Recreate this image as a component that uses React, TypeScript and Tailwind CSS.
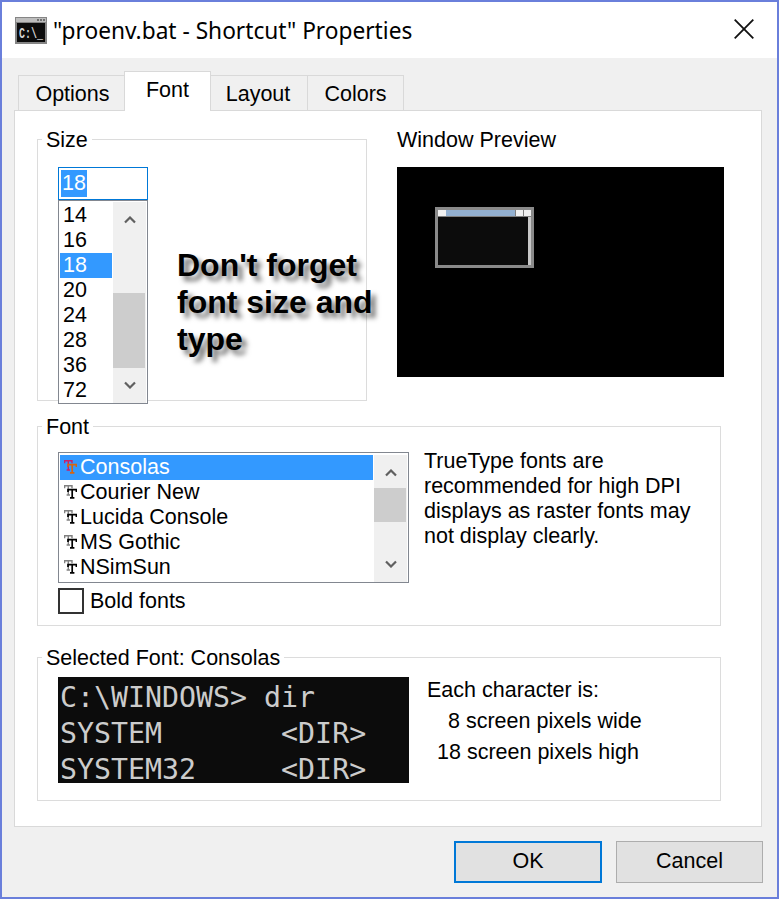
const ui = { fontFamily: '"Liberation Sans", Arial, sans-serif' };

function Chevron({ down = false }: { down?: boolean }) {
  return (
    <svg width="12" height="8" viewBox="0 0 12 8" className="block">
      <path d={down ? "M1 1.5 L6 6.5 L11 1.5" : "M1 6.5 L6 1.5 L11 6.5"} fill="none" stroke="#606060" strokeWidth="2.2" />
    </svg>
  );
}

function TT({ active = false }: { active?: boolean }) {
  return (
    <svg width="13" height="14" viewBox="0 0 13 14" className="mb-[2px] block shrink-0">
      <path d="M0.6 3.2V0.8H8V3.2M4.3 0.8V10M2.6 10H6" fill="none" stroke={active ? "#c8206a" : "#808080"} strokeWidth="1.4" />
      <path d="M4 7V4.6H12.4V7M8.2 4.6V12.6M6 12.8H10.4" fill="none" stroke={active ? "#d8640f" : "#000"} strokeWidth="1.7" />
    </svg>
  );
}

function Tab({ label, className }: { label: string; className: string }) {
  return (
    <div className={`-ml-px flex h-[35px] items-start justify-center border border-b-0 border-[#d9d9d9] bg-[#f0f0f0] pt-[5px] text-[21.5px] leading-[26px] text-black first:ml-0 ${className}`}>
      {label}
    </div>
  );
}

function Group({ title, className, children }: { title: string; className: string; children: React.ReactNode }) {
  return (
    <div className={`relative border border-[#dcdcdc] ${className}`}>
      <span className="absolute left-[4px] top-[-13px] bg-white px-[4px] text-[21.5px] leading-[26px] text-black">{title}</span>
      {children}
    </div>
  );
}

function Scrollbar({ height, thumbTop, thumbHeight }: { height: string; thumbTop: string; thumbHeight: string }) {
  return (
    <div className={`ml-px flex w-[33px] shrink-0 flex-col bg-[#f0f0f0] ${height}`}>
      <div className="flex h-[25px] shrink-0 items-end justify-center pb-[3px]"><Chevron /></div>
      <div className={`${thumbTop} ${thumbHeight} w-[32px] shrink-0 bg-[#cdcdcd]`} />
      <div className="flex-1" />
      <div className="flex h-[25px] shrink-0 items-start justify-center pt-[3px]"><Chevron down /></div>
    </div>
  );
}

export default function App() {
  const sizes = ["14", "16", "18", "20", "24", "28", "36", "72"];
  const fonts = ["Consolas", "Courier New", "Lucida Console", "MS Gothic", "NSimSun"];
  return (
    <div style={ui} className="flex h-[899px] w-[779px] flex-col border-2 border-[#6a7fdb] bg-[#f0f0f0]">
      <div className="flex h-[56px] shrink-0 items-center bg-white">
        <svg width="32" height="27" viewBox="0 0 32 27" className="ml-[13px] mt-[1px] shrink-0">
          <rect width="32" height="27" fill="#858585" />
          <rect x="1" y="1" width="30" height="4" fill="#bdbdbd" />
          <rect x="2" y="6" width="28" height="19" fill="#0c0c0c" />
          <rect x="22" y="2" width="2" height="2" fill="#707070" />
          <rect x="25" y="2" width="2" height="2" fill="#707070" />
          <rect x="28" y="2" width="2" height="2" fill="#707070" />
          <text x="4" y="14" transform="scale(1 1.5)" fontSize="10" fontWeight="700" fill="#d4d4d4" fontFamily="'Liberation Mono', monospace">{"C:\\_"}</text>
        </svg>
        <span className="ml-[6px] mt-[2px] whitespace-nowrap text-[22.7px] leading-none text-black" style={{ fontFamily: '"Noto Sans", sans-serif' }}>
          "proenv.bat - Shortcut" Properties
        </span>
        <svg width="20" height="20" viewBox="0 0 20 20" className="mb-[2px] ml-auto mr-[23px] shrink-0">
          <path d="M0.7 0.7L19.3 19.3M19.3 0.7L0.7 19.3" stroke="#111" strokeWidth="1.8" fill="none" />
        </svg>
      </div>

      <div className="ml-[16px] mt-[13px] flex h-[39px] shrink-0 items-end">
        <Tab label="Options" className="w-[107px] pl-[2px]" />
        <div className="relative z-10 -mb-px -ml-px flex h-[40px] w-[87px] items-start justify-center border border-b-0 border-[#d9d9d9] bg-white pt-[5px] text-[21.5px] leading-[26px] text-black">
          Font
        </div>
        <Tab label="Layout" className="w-[98px] pr-[2px]" />
        <Tab label="Colors" className="w-[97px]" />
      </div>

      <div className="ml-[12px] mr-[15px] flex h-[717px] shrink-0 flex-col border border-[#d9d9d9] bg-white pl-[22px] pt-[16px]">
        <div className="flex shrink-0 items-start">
          <Group title="Size" className="mt-[12px] h-[262px] w-[330px] shrink-0 pl-[20px] pt-[27px]">
            <div className="flex h-[33px] w-[90px] items-center border border-[#0078d7] bg-white pl-[2px]">
              <span className="inline-block bg-[#3399ff] px-px text-[21.5px] leading-[27px] text-white">18</span>
            </div>
            <div className="flex h-[204px] w-[90px] border border-[#828790] bg-white p-px pt-0">
              <div className="mt-px w-[52px] shrink-0 pt-px">
                {sizes.map((s) => (
                  <div key={s} className={`h-[25px] pl-[3px] text-[21.5px] leading-[25px] ${s === "18" ? "bg-[#3399ff] text-white" : "text-black"}`}>
                    {s}
                  </div>
                ))}
              </div>
              <div className="pt-px">
                <Scrollbar height="h-[201px]" thumbTop="mt-[66px]" thumbHeight="h-[75px]" />
              </div>
            </div>
            <div
              className="absolute left-[139px] top-[107px] w-[210px] text-[32px] font-bold leading-[37px] text-black"
              style={{ textShadow: "5px 5px 5px rgba(0,0,0,0.55)" }}
            >
              Don't forget font size and type
            </div>
          </Group>
          <div className="ml-[30px] w-[327px] shrink-0">
            <div className="h-[40px] text-[21.5px] leading-[26px] text-black">Window Preview</div>
            <div className="h-[210px] bg-black pl-[38px] pt-[40px]">
              <div className="flex h-[61px] w-[99px] flex-col border-[3px] border-[#8a8a8a]">
                <div className="flex h-[7px] shrink-0 border-b border-[#808080] bg-[#808080]">
                  <div className="h-[6px] w-[8px] bg-[#f0f0f0]" />
                  <div className="h-[6px] w-[69px] bg-[#93b0d0]" />
                  <div className="ml-auto h-[6px] w-[7px] bg-[#f0f0f0]" />
                  <div className="ml-px h-[6px] w-[7px] bg-[#f0f0f0]" />
                </div>
                <div className="flex flex-1 bg-[#0c0c0c]">
                  <div className="ml-auto w-[3px] bg-[#c8c8c8]" />
                </div>
              </div>
            </div>
          </div>
        </div>

        <Group title="Font" className="mt-[25px] flex h-[200px] w-[684px] shrink-0 flex-col pl-[20px] pt-[25px]">
          <div className="flex">
            <div className="flex h-[131px] w-[351px] shrink-0 border border-[#828790] bg-white px-px pt-[2px]">
              <div className="w-[313px] shrink-0">
                {fonts.map((f, i) => (
                  <div key={f} className={`flex h-[25px] items-center pl-[4px] text-[21.5px] leading-[25px] ${i === 0 ? "bg-[#3399ff] text-white" : "text-black"}`}>
                    <TT active={i === 0} />
                    <span className="ml-[3px]">{f}</span>
                  </div>
                ))}
              </div>
              <Scrollbar height="h-[127px]" thumbTop="mt-[8px]" thumbHeight="h-[34px]" />
            </div>
            <div className="-mt-[3px] ml-[15px] whitespace-nowrap text-[21.5px] leading-[25px] text-black">
              TrueType fonts are<br />recommended for high DPI<br />displays as raster fonts may<br />not display clearly.
            </div>
          </div>
          <div className="mt-[5px] flex items-center">
            <div className="h-[26px] w-[26px] border-2 border-[#333333] bg-white" />
            <span className="ml-[6px] text-[21.5px] leading-[26px] text-black">Bold fonts</span>
          </div>
        </Group>

        <Group title="Selected Font: Consolas" className="mt-[31px] flex h-[144px] w-[684px] shrink-0 pl-[20px] pt-[19px]">
          <div
            className="h-[106px] w-[351px] shrink-0 whitespace-pre bg-[#0c0c0c] pl-[2px] pt-[3px] text-[28.25px] leading-[36px] text-[#cccccc]"
            style={{ fontFamily: '"DejaVu Sans Mono", monospace' }}
          >
            {"C:\\WINDOWS> dir\nSYSTEM       <DIR>\nSYSTEM32     <DIR>"}
          </div>
          <div className="-mt-[2px] ml-[18px] whitespace-nowrap text-[21.5px] leading-[31px] text-black">
            <div>Each character is:</div>
            <div className="pl-[21px]">8 screen pixels wide</div>
            <div className="pl-[10px]">18 screen pixels high</div>
          </div>
        </Group>
      </div>

      <div className="flex flex-1 items-start justify-end pr-[14px] pt-[14px]">
        <button className="flex h-[42px] w-[148px] items-center justify-center border-2 border-[#0078d7] bg-[#e1e1e1] pb-px text-[21.5px] text-black">OK</button>
        <button className="ml-[14px] flex h-[42px] w-[147px] items-center justify-center border border-[#adadad] bg-[#e1e1e1] pb-px text-[21.5px] text-black">Cancel</button>
      </div>
    </div>
  );
}
